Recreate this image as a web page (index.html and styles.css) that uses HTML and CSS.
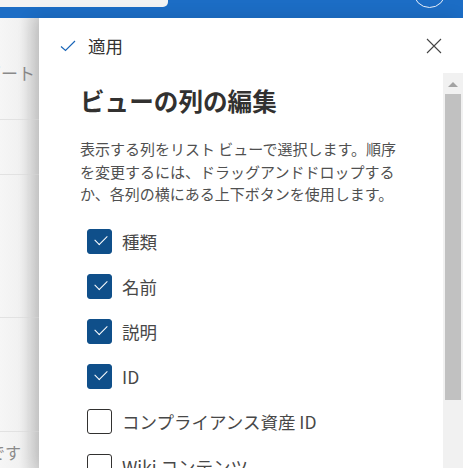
FILE: index.html
```html
<!DOCTYPE html>
<html lang="ja">
<head>
    <meta charset="UTF-8">
    <meta name="viewport" content="width=device-width, initial-scale=1.0">
    <title>ビューの列の編集</title>
    <link rel="stylesheet" href="styles.css">
</head>
<body>

<div class="topbar">
    <div class="search-box"></div>
    <div class="avatar"></div>
</div>

<div class="main">
    <div class="page-behind">
        <div class="behind-row behind-title"><span>レポート</span></div>
        <div class="behind-row tall"></div>
        <div class="behind-row chevron-row"><span>›</span></div>
        <div class="behind-row mid"></div>
        <div class="behind-row behind-foot"><span>ページです</span></div>
    </div>

    <div class="panel">
        <div class="panel-header">
            <button class="apply-btn">
                <svg width="16" height="12" viewBox="0 0 16 12"><path d="M1 6.5 L5.5 10.5 L15 1" fill="none" stroke="#1a66b8" stroke-width="1.2"/></svg>
                <span>適用</span>
            </button>
            <button class="close-btn">
                <svg width="16" height="16" viewBox="0 0 16 16"><path d="M1 1 L15 15 M15 1 L1 15" fill="none" stroke="#444" stroke-width="1.1"/></svg>
            </button>
        </div>

        <div class="panel-body">
            <div class="panel-content">
                <h2>ビューの列の編集</h2>
                <p class="desc">表示する列をリスト ビューで選択します。順序を変更するには、ドラッグアンドドロップするか、各列の横にある上下ボタンを使用します。</p>

                <ul class="column-list">
                    <li><span class="box checked"></span>種類</li>
                    <li><span class="box checked"></span>名前</li>
                    <li><span class="box checked"></span>説明</li>
                    <li><span class="box checked"></span>ID</li>
                    <li><span class="box"></span>コンプライアンス資産 ID</li>
                    <li><span class="box"></span>Wiki コンテンツ</li>
                    <li><span class="box"></span>コンテンツ タイプ</li>
                </ul>
            </div>
            <div class="scrollbar">
                <div class="arrow-up"></div>
                <div class="thumb"></div>
            </div>
        </div>
    </div>
</div>

</body>
</html>
```

FILE: styles.css
```css
body {
    margin: 0;
    width: 463px;
    height: 468px;
    overflow: hidden;
    font-family: "Noto Sans CJK JP", "Noto Sans", sans-serif;
    background-color: #f4f4f4;
}
.topbar {
    height: 18px;
    background-color: #1c6dc5;
    display: flex;
    justify-content: space-between;
    align-items: flex-end;
    overflow: hidden;
}
.search-box {
    width: 168px;
    height: 7px;
    margin-bottom: 11px;
    background-color: #f3f3f3;
    border-radius: 0 0 5px 0;
}
.avatar {
    width: 31px;
    height: 31px;
    margin-bottom: 10px;
    margin-right: 17px;
    border: 1.5px solid #e8f0fb;
    border-radius: 50%;
}
.main {
    display: flex;
    height: 450px;
}
.page-behind {
    width: 39px;
    flex-shrink: 0;
    overflow: hidden;
    background: linear-gradient(to right, #f6f6f6 0, #f1f1f1 20px, #d8d8d8 39px);
    color: #8a8a8a;
    font-size: 17px;
}
.behind-row {
    display: flex;
    justify-content: flex-end;
    white-space: nowrap;
    border-bottom: 1px solid #e2e2e2;
}
.behind-title {
    height: 101px;
    align-items: flex-start;
}
.behind-title span {
    margin-top: 42px;
    margin-right: 4px;
}
.behind-row.tall {
    height: 54px;
}
.chevron-row {
    height: 142px;
    justify-content: flex-start;
    align-items: flex-start;
    font-size: 14px;
}
.chevron-row span {
    transform: rotate(90deg);
    margin-left: -4px;
    margin-top: 100px;
}
.behind-row.mid {
    height: 113px;
}
.behind-foot {
    border-bottom: none;
    height: 40px;
}
.behind-foot span {
    margin-top: 8px;
    margin-right: 18px;
    font-size: 16px;
}
.panel {
    flex: 1;
    background-color: #fff;
    display: flex;
    flex-direction: column;
    box-shadow: -6px 0 16px rgba(0, 0, 0, 0.12);
    position: relative;
}
.panel-header {
    height: 55px;
    display: flex;
    justify-content: space-between;
    align-items: center;
    padding: 0 21px 0 21px;
    flex-shrink: 0;
}
.apply-btn, .close-btn {
    background: none;
    border: none;
    padding: 0;
    display: flex;
    align-items: center;
    font-family: inherit;
    color: #323130;
    cursor: pointer;
}
.apply-btn svg {
    margin-right: 12px;
    margin-top: 1px;
}
.apply-btn span {
    font-size: 17.5px;
}
.close-btn {
    margin-top: 1px;
}
.panel-body {
    flex: 1;
    display: flex;
    min-height: 0;
}
.panel-content {
    flex: 1;
    padding: 11px 38px 0 41px;
    overflow: hidden;
}
h2 {
    margin: 0 0 22px 0;
    font-size: 24.6px;
    line-height: 32px;
    font-weight: 700;
    color: #323130;
}
.desc {
    margin: 0 0 23px 0;
    font-size: 15px;
    line-height: 22.5px;
    color: #505050;
}
.column-list {
    list-style: none;
    margin: 0;
    padding: 0 0 0 7px;
    display: flex;
    flex-direction: column;
    gap: 20px;
}
.column-list li {
    display: flex;
    align-items: center;
    height: 25px;
    font-size: 17.5px;
    color: #484848;
    white-space: nowrap;
}
.box {
    width: 25px;
    height: 25px;
    box-sizing: border-box;
    border: 1px solid #323130;
    border-radius: 3px;
    margin-right: 10px;
    flex-shrink: 0;
    position: relative;
}
.box.checked {
    background-color: #0f4f8a;
    border-color: #0f4f8a;
}
.box.checked::after {
    content: "";
    position: absolute;
    left: 7px;
    top: 5px;
    width: 11px;
    height: 6px;
    border-left: 1.5px solid #fff;
    border-bottom: 1.5px solid #fff;
    transform: rotate(-45deg);
}
.scrollbar {
    width: 20px;
    flex-shrink: 0;
    background-color: #f1f1f1;
    display: flex;
    flex-direction: column;
    align-items: center;
}
.arrow-up {
    width: 0;
    height: 0;
    margin-top: 9px;
    border-left: 5px solid transparent;
    border-right: 5px solid transparent;
    border-bottom: 5px solid #a3a3a3;
}
.thumb {
    width: 16px;
    height: 306px;
    margin-top: 7px;
    background-color: #c1c1c1;
}
```
